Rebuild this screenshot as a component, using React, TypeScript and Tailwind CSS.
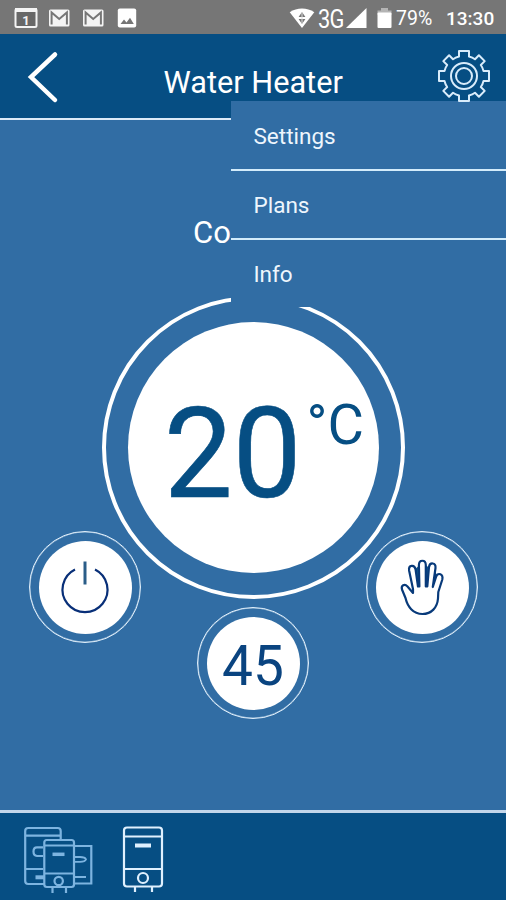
import React from 'react';

const menuItems = ['Settings', 'Plans', 'Info'];

function StatusBar() {
  return (
    <div className="flex h-[34px] shrink-0 items-center bg-[#767676] pt-0.5 pl-3.5 pr-[11px] text-white">
      <svg className="h-[22px] w-[24px]" viewBox="0 0 24 22">
        <rect x="1.5" y="2" width="21" height="18" rx="1.5" fill="#686868" stroke="#f4f4f4" strokeWidth="2" />
        <rect x="1" y="1" width="22" height="4" fill="#f4f4f4" />
        <text x="12" y="17.5" textAnchor="middle" fontSize="13" fontWeight="700" fill="#f4f4f4">1</text>
      </svg>
      {[0, 1].map((i) => (
        <svg key={i} className={i === 0 ? 'ml-[10px] h-[18px] w-[22px]' : 'ml-[12px] h-[18px] w-[22px]'} viewBox="0 0 22 18">
          <rect x="1" y="0.5" width="20.5" height="17" rx="1.5" fill="#f4f4f4" />
          <path d="M3.6 15.5V3.5L11.2 10 18.9 3.5V15.5" fill="none" stroke="#767676" strokeWidth="2" />
        </svg>
      ))}
      <svg className="ml-[13px] h-[20px] w-[20px]" viewBox="0 0 20 20">
        <rect x="0.8" y="0.5" width="18.4" height="19" rx="2" fill="#fff" />
        <path d="M3.5 16l3.5-4.5 2.5 3 3.5-4.7 3.8 6.2z" fill="#767676" />
      </svg>
      <div className="ml-auto flex items-center">
        <svg className="h-[21px] w-[26px]" viewBox="0 0 26 21">
          <path d="M.7 4.2C8-.6 18-.6 25.3 4.2L13 20z" fill="#fff" />
          <path d="M13 4l3.4 5H9.6zM9.6 11h6.8L13 16z" fill="#767676" />
          <path d="M13 4v12" stroke="#ddd" strokeWidth="1" />
        </svg>
        <span className="ml-[3px] w-[28px] pt-px text-[26px] leading-[30px] tracking-[-1px]">
          <span className="inline-block origin-left scale-x-[0.84]">3G</span>
        </span>
        <svg className="h-[20px] w-[21px]" viewBox="0 0 21 20">
          <path d="M0 20L20.5 0V20z" fill="#fff" />
        </svg>
        <svg className="ml-[10px] h-[20px] w-[15px]" viewBox="0 0 15 20">
          <path d="M4 0h7v2.5h3.5V7H.5V2.5H4z" fill="#b4b4b4" />
          <rect x="0.5" y="4.5" width="14" height="15.5" rx="1" fill="#fff" />
        </svg>
        <span className="ml-[4px] w-[38px] pt-0.5 text-[19.5px] leading-6 whitespace-nowrap">79%</span>
        <span className="ml-[12px] w-[49px] pt-0.5 text-[19px] font-medium leading-6 whitespace-nowrap">13:30</span>
      </div>
    </div>
  );
}

function GearIcon() {
  // one tooth profile repeated eight times around the hub
  return (
    <svg className="h-[54px] w-[54px]" viewBox="-27 -27 54 54" fill="none" stroke="#d9ecfb" strokeWidth="2" strokeLinejoin="round">
      <path d="M-5-25H5V-19.5Q8.5-18.7 11-16.8L14.9-20.7 20.7-14.9 16.8-11Q18.7-8.5 19.5-5H25V5H19.5Q18.7 8.5 16.8 11L20.7 14.9 14.9 20.7 11 16.8Q8.5 18.7 5 19.5V25H-5V19.5Q-8.5 18.7-11 16.8L-14.9 20.7-20.7 14.9-16.8 11Q-18.7 8.5-19.5 5H-25V-5H-19.5Q-18.7-8.5-16.8-11L-20.7-14.9-14.9-20.7-11-16.8Q-8.5-18.7-5-19.5Z" />
      <circle r="13" />
      <circle r="8" />
    </svg>
  );
}

function Header() {
  return (
    <header className="flex h-[86px] shrink-0 items-start border-b-2 border-[#dceaf8] bg-[#064e83]">
      <svg className="mt-[16px] ml-[26px] h-[54px] w-[34px]" viewBox="0 0 34 54" fill="none" stroke="#fff" strokeWidth="4.5" strokeLinecap="round">
        <path d="M29 4.5L5 27 29 50" strokeLinejoin="miter" />
      </svg>
      <h1 className="mt-[29px] ml-[103.5px] text-[30.7px] leading-[40px] whitespace-nowrap text-white">Water Heater</h1>
      <button className="relative z-20 mt-[15px] mr-[15px] ml-auto">
        <GearIcon />
      </button>
    </header>
  );
}

function Menu() {
  return (
    <nav className="absolute top-[101px] left-[231px] z-10 flex h-[206px] w-[275px] flex-col bg-[#316da4]">
      {menuItems.map((item, i) => (
        <div
          key={item}
          className={`flex h-[69px] shrink-0 items-center pt-0.5 pl-[22.5px] text-[22.5px] text-[#eef6fd] first:h-[70px] first:pt-1 last:pt-0 ${i < 2 ? 'border-b-2 border-[#d3ecfb]' : ''}`}
        >
          {item}
        </div>
      ))}
    </nav>
  );
}

function RoundButton({ children }: { children: React.ReactNode }) {
  return (
    <button className="flex h-[112px] w-[112px] items-center justify-center rounded-full border-[1.5px] border-[#e3f1fc] ring-[0.5px] ring-[#e3f1fc]/60 ring-inset">
      <span className="flex h-[93px] w-[93px] items-center justify-center rounded-full bg-white text-[#0a4480]">{children}</span>
    </button>
  );
}

function PowerIcon() {
  return (
    <svg className="h-[56px] w-[56px]" viewBox="-28 -28 56 56" fill="none" strokeWidth="2.2">
      <path d="M-10-17.5A22.5 22.5 0 1 0 10-17.5" stroke="#082f78" />
      <path d="M0-25.5V-2.5" stroke="#2a5d88" strokeWidth="3" />
    </svg>
  );
}

function HandIcon() {
  return (
    <svg className="h-[66px] w-[54px]" viewBox="-1 -1 54 66" strokeLinejoin="round" strokeLinecap="round">
      <path d="M18.5 15L23.4 10V31L21 32zM29 10L34 13 33 32 29.5 31zM38.8 14L41 21 37.5 32z" fill="#0c5288" />
      <path
        d="M17 38L11.5 31.5C8.5 28.3 4.8 30.5 6 34.5L9.5 43C11.5 51.5 17 59 26.500 59 35.500 59 41.300 52.500 42 43.500L42.300 37 46.300 24.500C47.500 19 42 17 40.200 21.500L36.800 32 39.500 13C40 7.300 33.800 7 33 12L31.300 31.500 29.800 31.500V10C29.600 4.300 23.100 4.300 22.900 10L23.400 31.500H22L19.600 14.500C18.500 9 12.300 10 13.100 15.500L17 34z"
        fill="#fff"
        stroke="#083a7a"
        strokeWidth="2.2"
      />
    </svg>
  );
}

function Dial() {
  return (
    <div className="mx-auto mt-[44px] flex h-[303px] w-[303px] items-center justify-center rounded-full border-4 border-white">
      <div className="flex h-[251px] w-[251px] items-start rounded-full bg-white pl-[36px] text-[#064e83]">
        <span className="mt-[68px] w-[140px] text-[127px] leading-[127px]">
          <span className="inline-block origin-left scale-x-[0.963] [-webkit-text-stroke:0.6px_#064e83]">20</span>
        </span>
        <span className="mt-[75px] ml-[3px] text-[56px] leading-[56px]">°C</span>
      </div>
    </div>
  );
}

function HeaterGroupIcon() {
  return (
    <svg className="h-[70px] w-[70px]" viewBox="0 0 70 70" fill="none" stroke="#7db4e0" strokeWidth="2.2">
      <rect x="2.2" y="3" width="35.5" height="56" rx="3" />
      <path d="M2 10.7H38M2 44H20M20 22.3H14Q10.5 22.3 10.5 26.5T14 31H20" />
      <path d="M12.5 52.3H21" strokeWidth="4" />
      <path d="M51 21H68.3V58.5H51M51 52H63" />
      <path d="M51 32H57Q62 32 63 34.300 62 36.800 57 36.800H51" strokeWidth="1.8" />
      <rect x="21.3" y="15" width="29.7" height="47" rx="2.5" fill="#064e83" />
      <path d="M21 20.5H51M21 48.5H51M29.5 63V68M43 63V68" />
      <path d="M29.5 29.3H41.5" strokeWidth="3.5" />
      <circle cx="35.7" cy="56" r="4.2" />
    </svg>
  );
}

function HeaterIcon() {
  return (
    <svg className="h-[70px] w-[42px]" viewBox="0 0 42 70" fill="none" stroke="#dff0fe" strokeWidth="2.2">
      <rect x="2" y="2.5" width="38" height="59" rx="3" />
      <path d="M2 11.5H40M2 44H40M13 62V67M30 62V67" />
      <path d="M13 20.5H29" strokeWidth="4" />
      <circle cx="21" cy="53" r="5" />
    </svg>
  );
}

export default function App() {
  return (
    <div className="relative flex h-[900px] w-[506px] flex-col overflow-hidden bg-[#316da4] font-['Roboto',sans-serif]">
      <StatusBar />
      <Header />
      <Menu />
      <main className="flex flex-1 flex-col pt-[92px]">
        <p className="pl-[193px] pt-px text-[31px] leading-[39px] text-white">Co</p>
        <Dial />
        <div className="-mt-[68px] flex justify-between pr-[28px] pl-[29px]">
          <RoundButton>
            <PowerIcon />
          </RoundButton>
          <RoundButton>
            <HandIcon />
          </RoundButton>
        </div>
        <div className="-mt-[36px] flex justify-center">
          <RoundButton>
            <span className="pt-[5px] text-[55px] leading-[64px]">45</span>
          </RoundButton>
        </div>
      </main>
      <footer className="flex h-[90px] shrink-0 items-start border-t-[3px] border-[#c3d6ea] bg-[#064e83] pt-[12px] pl-[23px]">
        <HeaterGroupIcon />
        <div className="ml-[29px]">
          <HeaterIcon />
        </div>
      </footer>
    </div>
  );
}
